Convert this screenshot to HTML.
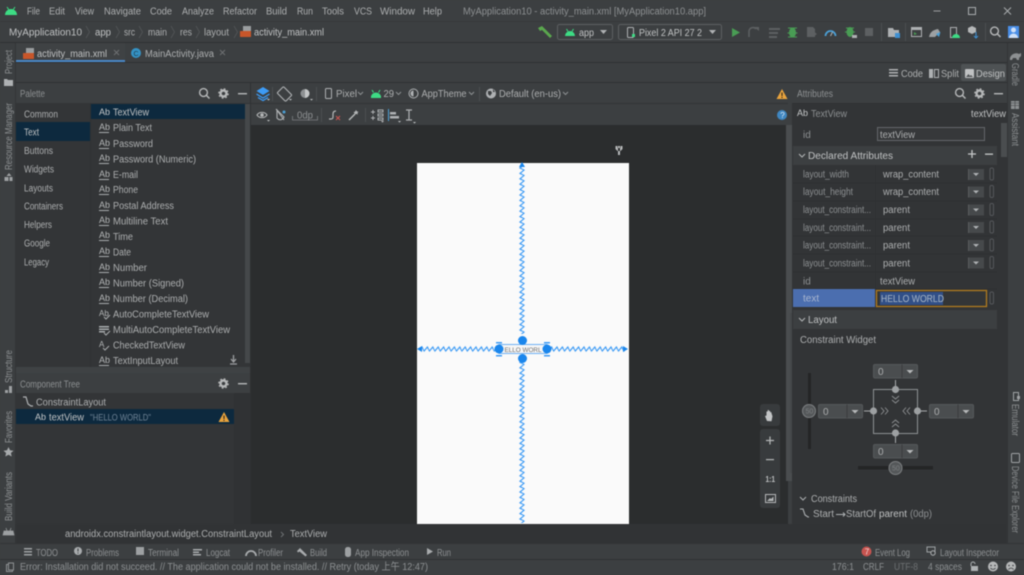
<!DOCTYPE html>
<html><head><meta charset="utf-8"><style>
html,body{margin:0;padding:0;background:#3c3f41;width:1024px;height:575px;overflow:hidden}
svg{display:block;filter:blur(.4px)}
text{font-family:"Liberation Sans","Noto Sans CJK TC",sans-serif;font-size:10px;fill:#adafb0;white-space:pre}
.d{fill:#8d9092}.b{fill:#c0c2c3}
</style></head><body>
<svg width="1024" height="575" viewBox="0 0 1024 575" xmlns="http://www.w3.org/2000/svg">
<defs>
<pattern id="zv" width="6" height="5.4" patternUnits="userSpaceOnUse" x="519" y="164"><path d="M3 -.7L5 .7 1 4 5 6.1" fill="none" stroke="#3d9bf5" stroke-width="1.200"/></pattern>
<pattern id="zh" width="5.4" height="6" patternUnits="userSpaceOnUse" x="418" y="346"><path d="M-.7 3L.7 5 4 1 6.1 5" fill="none" stroke="#3d9bf5" stroke-width="1.200"/></pattern>
<g id="ab"><text x="0" y="0" style="font-size:9px;fill:#b5b7b8">Ab</text><rect x="0" y="2" width="10" height="1" fill="#a8abad"/></g>
<g id="dd"><rect x="0" y="0" width="44" height="13.500" rx="1.500" fill="#4a4d4f" stroke="#55585a"/><rect x="28" y="0" width="1" height="13.500" fill="#3a3c3e"/><path d="M33 5.500h7l-3.500 3.500z" fill="#b5b7b8"/></g>
<g id="rowdd"><rect x="0" y="0" width="16" height="11" fill="#46494b"/><rect x="0" y="0" width="1" height="11" fill="#5a5d5f"/><path d="M5 4h6l-3 3z" fill="#aeb1b3"/><rect x="22" y="-1" width="3.500" height="12" rx="1.500" fill="none" stroke="#54575a"/></g>
<g id="xml"><rect x="3" y="0" width="8" height="5" fill="#9a9d9f"/><rect x="0" y="5" width="11" height="6" rx=".5" fill="#c8562a"/></g>
<g id="gear"><circle cx="0" cy="0" r="3" fill="none" stroke="#b5b7b8" stroke-width="2.400"/><circle cx="0" cy="0" r="4.700" fill="none" stroke="#b5b7b8" stroke-width="1.200" stroke-dasharray="1.800 1.900"/></g>
<g id="mag"><circle cx="0" cy="0" r="3.900" fill="none" stroke="#b5b7b8" stroke-width="1.400"/><path d="M3 3l3 3" stroke="#b5b7b8" stroke-width="1.500"/></g>
</defs>

<!-- base -->
<rect width="1024" height="575" fill="#3c3f41"/>
<rect x="0" y="21" width="1024" height="1" fill="#37393b"/>
<rect x="0" y="42" width="1024" height="1" fill="#2f3133"/>
<rect x="16" y="62" width="991" height="1" fill="#2f3133"/>
<rect x="16" y="82" width="991" height="1" fill="#2f3133"/>

<!-- title menu -->
<path d="M5 15a6 6 0 0 1 12 0z" fill="#3ddc84"/><path d="M7 7l2 3M15 7l-2 3" stroke="#3ddc84"/>
<text x="27" y="14.500" textLength="13">File</text>
<text x="49" y="14.500" textLength="16">Edit</text>
<text x="75" y="14.500" textLength="19">View</text>
<text x="104" y="14.500" textLength="37">Navigate</text>
<text x="150" y="14.500" textLength="22">Code</text>
<text x="182" y="14.500" textLength="32">Analyze</text>
<text x="223" y="14.500" textLength="34">Refactor</text>
<text x="266" y="14.500" textLength="21">Build</text>
<text x="297" y="14.500" textLength="16">Run</text>
<text x="322" y="14.500" textLength="22">Tools</text>
<text x="354" y="14.500" textLength="18">VCS</text>
<text x="380" y="14.500" textLength="35">Window</text>
<text x="423" y="14.500" textLength="19">Help</text>
<text x="463" y="14.500" textLength="243" class="d">MyApplication10 - activity_main.xml [MyApplication10.app]</text>
<rect x="933.500" y="10.500" width="7" height="1" fill="#9b9ea0"/>
<rect x="968.500" y="7.500" width="7" height="7" fill="none" stroke="#a8abad"/>
<path d="M1004 7.500l7 7M1011 7.500l-7 7" stroke="#a8abad" fill="none"/>

<!-- nav -->
<text x="9" y="35.500" textLength="73" class="b">MyApplication10</text>
<text x="95" y="35.500" textLength="16" class="b">app</text>
<text x="124" y="35.500" textLength="11">src</text>
<text x="148" y="35.500" textLength="19">main</text>
<text x="180" y="35.500" textLength="12">res</text>
<text x="204" y="35.500" textLength="25">layout</text>
<text x="254" y="35.500" textLength="70" class="b">activity_main.xml</text>
<path d="M86 26l3.500 6-3.500 6M116 26l3.500 6-3.500 6M139 26l3.500 6-3.500 6M171 26l3.500 6-3.500 6M196 26l3.500 6-3.500 6M234 26l3.500 6-3.500 6" fill="none" stroke="#505355"/>
<use href="#xml" x="240" y="26"/>

<!-- run toolbar -->
<path d="M538 28l4-2 10 10-2 2-8-8-2 1z" fill="#5aa74e"/>
<rect x="557.500" y="24.500" width="55" height="15" rx="2" fill="none" stroke="#5c5f61"/>
<path d="M565 36a5 5 0 0 1 10 0z" fill="#3ddc84"/><path d="M566.500 29l1.500 2.500M573.500 29L572 31.500" stroke="#3ddc84"/>
<text x="579" y="36" textLength="15" class="b">app</text>
<path d="M600 30h7l-3.500 4z" fill="#aeb1b3"/>
<rect x="618.500" y="24.500" width="103" height="15" rx="2" fill="none" stroke="#5c5f61"/>
<rect x="627.500" y="27.500" width="6" height="10" rx="1" fill="none" stroke="#aeb1b3"/>
<rect x="632" y="34" width="3" height="3" fill="#3ddc84"/>
<text x="639" y="36" textLength="63" class="b">Pixel 2 API 27 2</text>
<path d="M709 30h7l-3.500 4z" fill="#aeb1b3"/>
<path d="M732 28l8 4.500-8 4.500z" fill="#499c54"/>
<path d="M749 37v-6a4 4 0 0 1 7-2" fill="none" stroke="#5d6062" stroke-width="1.500"/><path d="M754 27h5v4z" fill="#5d6062"/>
<path d="M769 28h11v2h-11zm0 4h9v2h-9zm0 4h8v2h-8z" fill="#5d6062"/>
<ellipse cx="792.500" cy="32.500" rx="3.500" ry="5" fill="#499c54"/><path d="M788 28h9M787.500 33h10M788 37h9" stroke="#499c54"/>
<path d="M807 27h6l2 2v8h-8z" fill="#5d6062"/><path d="M813 31l4 3-4 3z" fill="#5d6062"/>
<path d="M825.500 36a5 5 0 0 1 10 0" fill="none" stroke="#4b9fd5" stroke-width="1.800"/><path d="M830.500 36l2-4" stroke="#aeb1b3"/>
<ellipse cx="850" cy="32" rx="3.500" ry="5" fill="#499c54"/><path d="M846 28h8M845 32h10" stroke="#499c54"/><path d="M852 35h5v3h-5z" fill="#afb1b3"/>
<rect x="865" y="28" width="8" height="8" fill="#5d6062"/>
<rect x="881" y="23" width="1" height="18" fill="#4c4f51"/>
<path d="M888 28h5l1 2h5v7h-11z" fill="#aeb1b3"/><rect x="895" y="33" width="5" height="5" fill="#3f8fd0"/>
<rect x="905" y="23" width="1" height="18" fill="#4c4f51"/>
<rect x="911.500" y="27.500" width="10" height="9" fill="none" stroke="#aeb1b3"/><rect x="912" y="28" width="9" height="2" fill="#aeb1b3"/><path d="M914 32l3 2-3 1z" fill="#499c54"/>
<path d="M929 37c1-5 4-7 9-8l2 3-5 5z" fill="#9da0a2"/><path d="M936 34l3 3 1.500-5z" fill="#4b9fd5"/>
<rect x="950.500" y="27.500" width="6" height="10" fill="none" stroke="#aeb1b3"/><path d="M952 38a4 4 0 0 1 8 0z" fill="#3ddc84"/>
<path d="M972 26l4 2v4l-4 2-4-2v-4z" fill="#b5b7b8"/><path d="M976 32v6M974 36l2 2 2-2" stroke="#3f8fd0" fill="none"/>
<rect x="985" y="23" width="1" height="18" fill="#4c4f51"/>
<use href="#mag" x="994.500" y="31"/>
<rect x="1008" y="26" width="11" height="12" fill="#4a8fe8"/><circle cx="1013.500" cy="30" r="2.500" fill="#cfe0f7"/><path d="M1009 38a4.500 4.500 0 0 1 9 0z" fill="#cfe0f7"/>

<!-- strips -->
<rect x="15" y="43" width="1" height="500" fill="#333537"/>
<rect x="1007" y="43" width="1" height="500" fill="#333537"/>
<text transform="translate(12,74) rotate(-90)" textLength="24" class="d">Project</text>
<text transform="translate(12,170) rotate(-90)" textLength="67" class="d">Resource Manager</text>
<text transform="translate(12,383) rotate(-90)" textLength="33" class="d">Structure</text>
<text transform="translate(12,443) rotate(-90)" textLength="32" class="d">Favorites</text>
<text transform="translate(12,521) rotate(-90)" textLength="49" class="d">Build Variants</text>
<text transform="translate(1012,63) rotate(90)" textLength="23" class="d">Gradle</text>
<text transform="translate(1012,113) rotate(90)" textLength="33" class="d">Assistant</text>
<text transform="translate(1012,404) rotate(90)" textLength="32" class="d">Emulator</text>
<text transform="translate(1012,466) rotate(90)" textLength="67" class="d">Device File Explorer</text>
<path d="M4 79h3l1 1h5v6H4z" fill="#aeb1b3"/>
<path d="M9 173l2.500 3h-5zM4.500 177h4v4h-4zM9.500 177h3v4h-3z" fill="#9da0a2"/>
<path d="M5 390h3v3H5zM9 386h3v7H9z" fill="#9da0a2"/>
<path d="M8.500 447l1.500 3.300 3.500.4-2.600 2.300.8 3.500-3.200-1.800-3.200 1.800.8-3.500-2.600-2.300 3.500-.4z" fill="#a8abad"/>
<path d="M4 531h9l1 4H3zM6 528l1 3M11 528l-1 3" fill="#9da0a2" stroke="#9da0a2" stroke-width=".7"/>
<path d="M1010 58c1-4 6-6 9-4l2-1v3l-2 2v2h-2l-1-2h-3l-1 2h-2z" fill="#8d9092"/>
<path d="M1011 101h8v8h-8z" fill="#8d9092"/><path d="M1011 103h8M1011 105.500h8M1015 101v8" stroke="#3c3f41" stroke-width=".6"/>
<rect x="1013.500" y="392.500" width="5" height="8" fill="none" stroke="#a0a3a5"/><rect x="1017" y="396" width="3" height="3" fill="#a0a3a5"/>
<rect x="1011.500" y="453.500" width="8" height="9" rx="1" fill="none" stroke="#a0a3a5"/>

<!-- tabs -->
<rect x="16" y="43" width="109" height="19" fill="#3f4244"/>
<rect x="16" y="60" width="109" height="2" fill="#4a88c7"/>
<use href="#xml" x="23" y="48"/>
<text x="37" y="57" textLength="70" class="b">activity_main.xml</text>
<path d="M114 50l5 5M119 50l-5 5" stroke="#6d7072" fill="none"/>
<circle cx="136" cy="53" r="5" fill="#3592c4"/><text x="133.500" y="56" style="font-size:7px;fill:#1e3d4e">C</text>
<text x="145" y="57" textLength="69">MainActivity.java</text>
<path d="M220 50l5 5M225 50l-5 5" stroke="#6d7072" fill="none"/>

<!-- code/split/design -->
<rect x="961" y="64" width="45" height="17" rx="2" fill="#4e5254"/>
<path d="M889 69h9v1.500h-9zm0 3h9v1.500h-9zm0 3h9v1.500h-9z" fill="#aeb1b3"/>
<text x="901" y="77" textLength="22">Code</text>
<path d="M929 69h4v9h-4z" fill="#aeb1b3"/><rect x="934.500" y="69.500" width="4" height="8" fill="none" stroke="#aeb1b3"/>
<text x="941" y="77" textLength="18">Split</text>
<rect x="965" y="69" width="9" height="9" rx="1" fill="#c0c2c3"/><path d="M966 77l2.500-3 1.500 2 1-1 2 2z" fill="#4e5254"/>
<text x="976" y="77" textLength="29" class="b">Design</text>

<!-- Palette header -->
<text x="20" y="97" textLength="25" class="d">Palette</text>
<use href="#mag" x="203.500" y="92.500"/>
<use href="#gear" x="223.500" y="93.500"/>
<rect x="238" y="93" width="9" height="1.400" fill="#b5b7b8"/>

<!-- Palette -->
<rect x="16" y="103" width="235" height="264" fill="#333537"/>
<rect x="90" y="103" width="1" height="264" fill="#2f3133"/>
<rect x="16" y="122" width="74" height="19" fill="#0d293e"/>
<rect x="91" y="104" width="159" height="15" fill="#0d293e"/>
<rect x="245" y="104" width="5" height="259" fill="#45484a"/>
<text x="24" y="117.500" textLength="34">Common</text>
<text x="24" y="135.500" textLength="15" class="b">Text</text>
<text x="24" y="154" textLength="29">Buttons</text>
<text x="24" y="172.500" textLength="30">Widgets</text>
<text x="24" y="191.500" textLength="29">Layouts</text>
<text x="24" y="209.500" textLength="39">Containers</text>
<text x="24" y="228" textLength="28">Helpers</text>
<text x="24" y="246.500" textLength="26">Google</text>
<text x="24" y="265.500" textLength="25">Legacy</text>
<text x="99" y="115" style="font-size:9px;fill:#c6c8c9">Ab</text>
<text x="113" y="115.500" textLength="36" class="b">TextView</text>
<use href="#ab" x="99" y="130"/><text x="113" y="131" textLength="39">Plain Text</text>
<use href="#ab" x="99" y="146"/><text x="113" y="147" textLength="40">Password</text>
<use href="#ab" x="99" y="161"/><text x="113" y="162.500" textLength="83">Password (Numeric)</text>
<use href="#ab" x="99" y="177"/><text x="113" y="178" textLength="25">E-mail</text>
<use href="#ab" x="99" y="192"/><text x="113" y="193" textLength="25">Phone</text>
<use href="#ab" x="99" y="208"/><text x="113" y="209" textLength="61">Postal Address</text>
<use href="#ab" x="99" y="223"/><text x="113" y="224.500" textLength="55">Multiline Text</text>
<use href="#ab" x="99" y="238"/><text x="113" y="240" textLength="20">Time</text>
<use href="#ab" x="99" y="254"/><text x="113" y="255.500" textLength="18">Date</text>
<use href="#ab" x="99" y="270"/><text x="113" y="271" textLength="34">Number</text>
<use href="#ab" x="99" y="285"/><text x="113" y="286.500" textLength="71">Number (Signed)</text>
<use href="#ab" x="99" y="301"/><text x="113" y="302" textLength="75">Number (Decimal)</text>
<text x="99" y="316" style="font-size:8px;fill:#b5b7b8">Ab</text><path d="M104 317l2 2 4-4" fill="none" stroke="#a8abad"/>
<text x="113" y="317.500" textLength="96">AutoCompleteTextView</text>
<path d="M99 326h10v1.500H99zm0 2.500h10v1.500H99zm0 2.500h6v1.500h-6z" fill="#a8abad"/><path d="M104 333l2 2 4-4" fill="none" stroke="#a8abad"/>
<text x="113" y="333" textLength="117">MultiAutoCompleteTextView</text>
<text x="99" y="347" style="font-size:8px;fill:#b5b7b8">A</text><path d="M103 348l2 2 4-4" fill="none" stroke="#a8abad"/>
<text x="113" y="348.500" textLength="72">CheckedTextView</text>
<use href="#ab" x="99" y="363"/><text x="113" y="364" textLength="65">TextInputLayout</text>
<path d="M233.500 355v6M231 359l2.500 3 2.500-3M230 364h7" fill="none" stroke="#9da0a2" stroke-width="1.300"/>

<!-- splitter + tree -->
<rect x="16" y="367" width="235" height="6" fill="#3f4244"/>
<text x="20" y="387.500" textLength="60" class="d">Component Tree</text>
<use href="#gear" x="223.500" y="383.500"/>
<rect x="238" y="383" width="9" height="1.400" fill="#b5b7b8"/>
<rect x="16" y="393" width="218" height="131" fill="#333537"/>
<rect x="234" y="393" width="17" height="131" fill="#303234"/>
<path d="M23 397h3l2 7 3 2h2" fill="none" stroke="#aeb1b3" stroke-width="1.200"/>
<text x="36" y="405.500" textLength="70">ConstraintLayout</text>
<rect x="16" y="409" width="218" height="15" fill="#0d293e"/>
<text x="35" y="420" style="font-size:9px;fill:#c6c8c9">Ab</text>
<text x="49" y="420.500" textLength="35" class="b">textView</text>
<text x="90" y="420.500" textLength="61" style="font-size:9px;fill:#6f8395">"HELLO WORLD"</text>
<path d="M224 412l5.500 10h-11z" fill="#e8a33d"/><rect x="223.400" y="415.500" width="1.200" height="3.500" fill="#3a2f20"/><rect x="223.400" y="419.800" width="1.200" height="1.200" fill="#3a2f20"/>

<!-- design toolbar -->
<rect x="251" y="103" width="537" height="1" fill="#323436"/>
<rect x="250" y="83" width="1" height="441" fill="#2f3133"/>
<path d="M263 87l6.500 4-6.500 4-6.500-4z" fill="#3d9bf5"/><path d="M256.500 94l6.500 4 6.500-4M258 97.500l5 3 5-3" fill="none" stroke="#3d9bf5" stroke-width="1.300"/>
<path d="M267 99h3l-1.500 1.500z" fill="#c6c8c9"/>
<rect x="272" y="87" width="1" height="14" fill="#4c4f51"/>
<rect x="280" y="88" width="9" height="12" rx="1" fill="none" stroke="#aeb1b3" stroke-width="1.100" transform="rotate(-45 284.500 94)"/>
<path d="M289 99h3l-1.500 1.500z" fill="#c6c8c9"/>
<circle cx="305" cy="93.500" r="4.500" fill="#8d9092"/><path d="M305 89a4.500 4.500 0 0 1 0 9z" fill="#c3c5c6"/>
<path d="M310 99h3l-1.500 1.500z" fill="#c6c8c9"/>
<rect x="316" y="87" width="1" height="14" fill="#4c4f51"/>
<rect x="325.500" y="88.500" width="6" height="10" rx="1" fill="none" stroke="#aeb1b3"/>
<text x="336" y="97" textLength="21">Pixel</text>
<path d="M358 92l2.500 2.500L363 92" fill="none" stroke="#8d9092"/>
<path d="M371 97a5 4.500 0 0 1 10 0z" fill="#3ddc84"/><rect x="371" y="96" width="10" height="2" fill="#3ddc84"/><path d="M372 90l1.500 2.500M380 90l-1.500 2.500" stroke="#3ddc84"/>
<text x="383.500" y="97" textLength="10.500">29</text>
<path d="M396 92l2.500 2.500L401 92" fill="none" stroke="#8d9092"/>
<circle cx="413.500" cy="93.500" r="4.500" fill="none" stroke="#aeb1b3"/><path d="M413.500 90.500a3 3 0 0 0 0 6z" fill="#aeb1b3"/>
<text x="421.500" y="97" textLength="45">AppTheme</text>
<path d="M469 92l2.500 2.500L474 92" fill="none" stroke="#8d9092"/>
<rect x="479" y="87" width="1" height="14" fill="#4c4f51"/>
<circle cx="491" cy="93.500" r="5" fill="#aeb1b3"/><path d="M488 91l3 0 1 2-2 3-2-2zM493 89l2 3-2 0z" fill="#3c3f41"/>
<text x="499" y="97" textLength="62">Default (en-us)</text>
<path d="M563 92l2.500 2.500L568 92" fill="none" stroke="#8d9092"/>
<path d="M782 89l5.500 10h-11z" fill="#e8a33d"/><rect x="781.400" y="92.500" width="1.200" height="3.500" fill="#3a2f20"/><rect x="781.400" y="96.800" width="1.200" height="1.200" fill="#3a2f20"/>

<!-- toolbar row 2 -->
<path d="M257 115c2-3.500 8-3.500 10 0-2 3.500-8 3.500-10 0z" fill="none" stroke="#b5b7b8" stroke-width="1.100"/><circle cx="262" cy="115" r="1.800" fill="#b5b7b8"/>
<path d="M267 120h3l-1.500 1.500z" fill="#c6c8c9"/>
<path d="M277 110l7 7a4 4 0 0 1-6 2l-1-1z" fill="none" stroke="#aeb1b3" stroke-width="1.100"/><path d="M276 109l8 11" stroke="#aeb1b3"/><circle cx="284" cy="112" r="1.500" fill="#4b9fd5"/>
<path d="M292.500 116v4h25v-4" fill="none" stroke="#7c7f81" stroke-width=".8"/>
<text x="297" y="118.500" textLength="16" class="d">0dp</text>
<rect x="321" y="108" width="1" height="14" fill="#4c4f51"/>
<path d="M329 119h2c2 0 2-1 2-3v-2c0-2 1-3 3-3" fill="none" stroke="#b5b7b8" stroke-width="1.200"/>
<path d="M336 116l4 4M340 116l-4 4" stroke="#c75450" stroke-width="1.100"/>
<path d="M349 120l6-6" stroke="#b5b7b8" stroke-width="1.500"/><path d="M356 110l1 1.500 1.500.3-1 1.200.3 1.500-1.800-.6-1.500 .9v-1.700l-1-1 1.500-.4z" fill="#b5b7b8"/>
<rect x="365" y="108" width="1" height="14" fill="#4c4f51"/>
<path d="M373 110v4M371 112h4M373 116v4M371 118h4M378 110h5v2h-5zM378 114h5v2h-5zM378 118h5v2h-5z" stroke="#aeb1b3" fill="none"/>
<rect x="388" y="109" width="1" height="12" fill="#4b9fd5"/><rect x="390" y="112" width="6" height="2.500" fill="#aeb1b3"/><rect x="390" y="116" width="9" height="2.500" fill="#aeb1b3"/>
<path d="M406 110h6M409 110v10M406 120h6" stroke="#aeb1b3" fill="none" stroke-width="1.200"/><path d="M413 122h3l-1.500 1.500z" fill="#c6c8c9"/>
<path d="M398 121h3l-1.500 1.500zM381 121h3l-1.500 1.500z" fill="#c6c8c9"/>
<circle cx="782" cy="115" r="5" fill="#3f86c0"/><text x="780.200" y="118" style="font-size:8px;fill:#d6e6f4">?</text>

<!-- surface -->
<rect x="251" y="125" width="537" height="399" fill="#2b2d2e"/>
<rect x="417" y="163" width="212" height="361" fill="#fafafa"/>
<path d="M618 146h2v9h-2zM615.500 146v3l2 2h3l2-2v-3h-2v2h-3v-2z" fill="#b8babb"/>

<rect x="519" y="166" width="6" height="168" fill="url(#zv)"/>
<rect x="519" y="356" width="6" height="167" fill="url(#zv)"/>
<path d="M522 162l3 5h-6z" fill="#1a86ec"/>
<rect x="421" y="346" width="75" height="6" fill="url(#zh)"/>
<rect x="550" y="346" width="75" height="6" fill="url(#zh)"/>
<path d="M417 349l5-3v6zM628 349l-5-3v6z" fill="#1a86ec"/>
<rect x="499" y="344.500" width="48" height="9" fill="#f6f6f6" stroke="#6eb1f3"/>
<text x="504.500" y="352" textLength="37" style="font-size:6.500px;fill:#6f6f6f">ELLO WORL</text>
<rect x="496" y="342" width="6" height="1.500" fill="#3d9bf5"/><rect x="496" y="355" width="6" height="1.500" fill="#3d9bf5"/><rect x="544" y="342" width="6" height="1.500" fill="#3d9bf5"/><rect x="544" y="355" width="6" height="1.500" fill="#3d9bf5"/>
<circle cx="522.500" cy="340.500" r="4.500" fill="#1a86ec"/><circle cx="522.500" cy="358.500" r="4.500" fill="#1a86ec"/><circle cx="499" cy="349" r="4.500" fill="#1a86ec"/><circle cx="547" cy="349" r="4.500" fill="#1a86ec"/>

<!-- surface scrollbar + zoom ctl -->
<rect x="786" y="125" width="6" height="356" fill="#4a4d4f"/>
<rect x="760" y="404" width="20" height="22" rx="3" fill="#383b3d"/>
<path d="M767 421l-2-5 1.500-.5v-4h1.200v-1.500h1.200v1h1.300v1.200h1.300v1l1 3-1 5z" fill="#c3c5c6"/>
<rect x="760" y="429" width="20" height="79" rx="3" fill="#383b3d"/>
<path d="M766 440.500h8M770 436.500v8" stroke="#b5b7b8" stroke-width="1.200"/>
<rect x="766" y="459" width="8" height="1.200" fill="#b5b7b8"/>
<text x="765.500" y="482" textLength="9.500" style="font-size:8.500px;fill:#c0c2c3;font-weight:bold">1:1</text>
<rect x="765.500" y="494.500" width="10" height="8" fill="none" stroke="#b5b7b8"/><path d="M767 501l3-3 1 1 2.500-2.500v4.500z" fill="#b5b7b8"/>

<!-- Attributes -->
<rect x="792" y="103" width="215" height="421" fill="#323436"/>
<rect x="792" y="103" width="215" height="1" fill="#2f3133"/>
<text x="797" y="97" textLength="36" class="d">Attributes</text>
<use href="#mag" x="959.500" y="92.500"/>
<use href="#gear" x="979.500" y="93.500"/>
<rect x="994" y="93" width="9" height="1.400" fill="#b5b7b8"/>

<text x="797" y="116" style="font-size:9px;fill:#c6c8c9">Ab</text>
<text x="811" y="117" textLength="36" class="d">TextView</text>
<text x="971" y="117" textLength="35" class="b">textView</text>
<rect x="1001" y="123" width="6" height="34" fill="#4a4d4f"/>

<text x="803" y="138" class="d">id</text>
<rect x="877.500" y="127.500" width="107" height="13" fill="#36383a" stroke="#64676a"/>
<text x="880" y="138" textLength="35">textView</text>

<rect x="793" y="146" width="204" height="19" fill="#3c3f41"/>
<path d="M799 154l3 3 3-3" fill="none" stroke="#b5b7b8"/>
<text x="808" y="159" textLength="85" class="b">Declared Attributes</text>
<path d="M968 154h8M972 150v8" stroke="#c6c8c9" stroke-width="1.300"/>
<rect x="985" y="153.500" width="8" height="1.300" fill="#c6c8c9"/>

<path d="M793 183h204M793 201h204M793 219h204M793 236h204M793 254h204M793 272h204M793 289h204M875.500 165v142" stroke="#2e3032" fill="none"/>
<text x="803" y="177.500" textLength="46" class="d">layout_width</text>
<text x="803" y="195" textLength="50" class="d">layout_height</text>
<text x="803" y="213" textLength="68" class="d">layout_constraint...</text>
<text x="803" y="231" textLength="68" class="d">layout_constraint...</text>
<text x="803" y="248.500" textLength="68" class="d">layout_constraint...</text>
<text x="803" y="266.500" textLength="68" class="d">layout_constraint...</text>
<text x="803" y="284.500" class="d">id</text>
<text x="883" y="177.500" textLength="56">wrap_content</text>
<text x="883" y="195" textLength="56">wrap_content</text>
<text x="883" y="213" textLength="27">parent</text>
<text x="883" y="231" textLength="27">parent</text>
<text x="883" y="248.500" textLength="27">parent</text>
<text x="883" y="266.500" textLength="27">parent</text>
<text x="880" y="284.500" textLength="35">textView</text>
<use href="#rowdd" x="968" y="169"/><use href="#rowdd" x="968" y="186.500"/><use href="#rowdd" x="968" y="204.500"/><use href="#rowdd" x="968" y="222"/><use href="#rowdd" x="968" y="240"/><use href="#rowdd" x="968" y="257.500"/>
<rect x="793" y="289" width="82" height="18" fill="#4b6eaf"/>
<text x="803" y="301.500" style="fill:#a9b6cf">text</text>
<rect x="876.500" y="290.500" width="110" height="16" fill="#333537" stroke="#b07a1e" stroke-width="1.300"/>
<rect x="880" y="292" width="63" height="13" fill="#2f65ca" opacity=".55"/>
<text x="881" y="302" textLength="63" style="fill:#a9b7c6">HELLO WORLD</text>
<rect x="990" y="292" width="3.500" height="12" rx="1.500" fill="none" stroke="#54575a"/>

<rect x="793" y="310" width="204" height="19" fill="#3c3f41"/>
<path d="M799 318l3 3 3-3" fill="none" stroke="#b5b7b8"/>
<text x="808" y="323" textLength="29" class="b">Layout</text>
<text x="800" y="343" textLength="76">Constraint Widget</text>

<!-- constraint widget -->
<rect x="873.500" y="389.500" width="44" height="44" fill="none" stroke="#8d9092"/>
<use href="#dd" x="873.500" y="364.500"/><use href="#dd" x="818.500" y="404.500"/><use href="#dd" x="929.500" y="404.500"/><use href="#dd" x="873.500" y="444.500"/>
<text x="878" y="375" style="fill:#a9abac">0</text><text x="823" y="415" style="fill:#a9abac">0</text><text x="934" y="415" style="fill:#a9abac">0</text><text x="878" y="455" style="fill:#a9abac">0</text>
<path d="M895.500 380v9M895.500 433v10M864 411h9M918 411h9" stroke="#a8abad"/>
<circle cx="895.500" cy="389.500" r="3.600" fill="#9da0a2"/><circle cx="895.500" cy="433" r="3.600" fill="#9da0a2"/><circle cx="873.500" cy="411" r="3.600" fill="#9da0a2"/><circle cx="917.500" cy="411" r="3.600" fill="#9da0a2"/>
<path d="M892 396l3.500 3 3.500-3M892 400l3.500 3 3.500-3M892 427l3.500-3 3.500 3M892 423l3.500-3 3.500 3M881 407.500l3 3.500-3 3.500M885 407.500l3 3.500-3 3.500M910 407.500l-3 3.500 3 3.500M906 407.500l-3 3.500 3 3.500" fill="none" stroke="#8d9092" stroke-width=".9"/>
<rect x="808" y="373" width="3" height="76" fill="#242526"/>
<rect x="858" y="466" width="75" height="3.500" fill="#242526"/>
<circle cx="809" cy="411" r="6.500" fill="#55585a" stroke="#7c7f81"/><text x="805.500" y="413.500" style="font-size:7px;fill:#7c7f81">50</text>
<circle cx="895.500" cy="468" r="6.500" fill="#55585a" stroke="#7c7f81"/><text x="892" y="470.500" style="font-size:7px;fill:#7c7f81">50</text>

<path d="M800 497l3 3 3-3" fill="none" stroke="#aeb1b3"/>
<text x="811" y="502" textLength="46">Constraints</text>
<path d="M800 509h3l2 6 3 2h1" fill="none" stroke="#aeb1b3" stroke-width="1.100"/>
<text x="813" y="517" textLength="21">Start</text>
<path d="M836 514.500h9M843 512.500l2 2-2 2" fill="none" stroke="#aeb1b3"/>
<text x="846" y="517" textLength="30">StartOf</text>
<text x="879" y="517" textLength="28" class="b">parent</text>
<text x="910" y="517" textLength="22" class="d">(0dp)</text>
<rect x="790" y="313" width="2" height="160" fill="#45484a"/>

<!-- breadcrumb -->
<rect x="16" y="524" width="991" height="19" fill="#313335"/>
<rect x="0" y="543" width="1024" height="1" fill="#323436"/>
<text x="65" y="537" textLength="207">androidx.constraintlayout.widget.ConstraintLayout</text>
<path d="M281 532l2.500 2.500L281 537" fill="none" stroke="#6d7072"/>
<text x="290" y="537" textLength="37">TextView</text>

<!-- tool windows bar -->
<rect x="0" y="559" width="1024" height="1" fill="#2f3133"/>
<path d="M24 548h8v1.500h-8zm0 3h8v1.500h-8zm0 3h8v1.500h-8z" fill="#9da0a2"/>
<text x="36" y="556" textLength="22" class="d">TODO</text>
<circle cx="78" cy="551" r="4" fill="#a8abad"/><rect x="77.500" y="548.500" width="1" height="3" fill="#3c3f41"/><rect x="77.500" y="552.500" width="1" height="1" fill="#3c3f41"/>
<text x="86" y="556" textLength="33" class="d">Problems</text>
<rect x="136" y="547" width="8" height="8" fill="#9da0a2"/>
<text x="148" y="556" textLength="31" class="d">Terminal</text>
<path d="M193 549h9v1.500h-9zm0 2.500h6v1.500h-6zm0 2.500h8v1.500h-8z" fill="#a8abad"/>
<text x="206" y="556" textLength="24" class="d">Logcat</text>
<path d="M246 556a5 5 0 0 1 10 0" fill="none" stroke="#a8abad" stroke-width="1.800"/>
<text x="258" y="556" textLength="25" class="d">Profiler</text>
<path d="M297 551l3-3 7 7-1.500 1.500-6-5-1.500 1z" fill="#a8abad"/>
<text x="310" y="556" textLength="17" class="d">Build</text>
<rect x="345" y="547" width="6" height="10" rx="2.500" fill="#9da0a2"/>
<text x="355" y="556" textLength="54" class="d">App Inspection</text>
<path d="M427 548l6 3.500-6 3.500z" fill="#a8abad"/>
<text x="437" y="556" textLength="14" class="d">Run</text>
<circle cx="866.500" cy="551.500" r="5" fill="#c75450"/><text x="864.800" y="554.500" style="font-size:8px;fill:#f0d8d6">7</text>
<text x="875" y="556" textLength="35" class="d">Event Log</text>
<path d="M927 547h8v5h-8z" fill="none" stroke="#9da0a2"/><circle cx="933" cy="553" r="2.200" fill="#3c3f41" stroke="#aeb1b3"/>
<text x="940" y="556" textLength="59" class="d">Layout Inspector</text>

<!-- status -->
<rect x="6.500" y="564.500" width="6" height="7" fill="none" stroke="#8d9092"/><rect x="8.500" y="563" width="5" height="7" fill="#3c3f41" stroke="#8d9092"/>
<text x="20" y="570" textLength="408" class="d">Error: Installation did not succeed. // The application could not be installed. // Retry (today 上午 12:47)</text>
<text x="832" y="570" textLength="22" class="d">176:1</text>
<text x="863" y="570" textLength="21" class="d">CRLF</text>
<text x="894" y="570" textLength="24" style="fill:#6d7072">UTF-8</text>
<text x="928" y="570" textLength="34" class="d">4 spaces</text>
<rect x="971" y="566" width="7" height="5" fill="#aeb1b3"/><path d="M971 566v-2a2 2 0 0 1 4 0" fill="none" stroke="#aeb1b3"/>
<circle cx="993" cy="566.500" r="5" fill="#b5b7b8"/><circle cx="991" cy="565.500" r=".8" fill="#3c3f41"/><circle cx="995" cy="565.500" r=".8" fill="#3c3f41"/><path d="M990.500 568a3 3 0 0 0 5 0" fill="none" stroke="#3c3f41" stroke-width=".8"/>
<circle cx="1011" cy="566.500" r="5" fill="#b5b7b8"/><circle cx="1009" cy="565.500" r=".8" fill="#3c3f41"/><circle cx="1013" cy="565.500" r=".8" fill="#3c3f41"/><path d="M1008.500 569.500a3 3 0 0 1 5 0" fill="none" stroke="#3c3f41" stroke-width=".8"/>
</svg>
<script>document.querySelectorAll('text[textLength]').forEach(function(t){t.setAttribute('lengthAdjust','spacingAndGlyphs')});</script>
</body></html>
